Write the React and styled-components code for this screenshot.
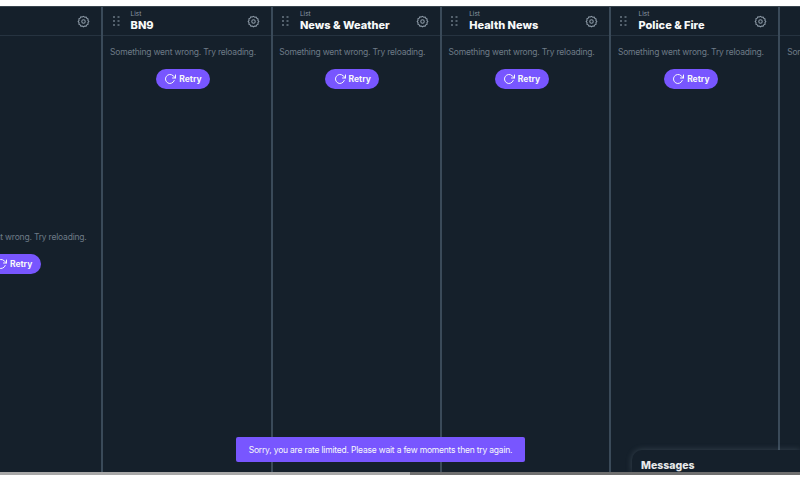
import React from 'react'
import styled, { createGlobalStyle } from 'styled-components'
import { FiRotateCw } from 'react-icons/fi'

const columns = [
  { title: '', kind: '', centered: true },
  { title: 'BN9', kind: 'List' },
  { title: 'News & Weather', kind: 'List' },
  { title: 'Health News', kind: 'List' },
  { title: 'Police & Fire', kind: 'List' },
  { title: '', kind: '' },
]

const Gear = () => (
  <svg width="13" height="13" viewBox="0 0 24 24" fill="none" stroke="currentColor" strokeWidth="2">
    <path d="M12 2.5l2.2 1.6 2.7-.3 1.2 2.4 2.4 1.2-.3 2.7L21.8 12l-1.6 2.2.3 2.7-2.4 1.2-1.2 2.4-2.7-.3L12 21.8l-2.2-1.6-2.7.3-1.2-2.4-2.4-1.2.3-2.7L2.2 12l1.6-2.2-.3-2.7 2.4-1.2 1.2-2.4 2.7.3z" />
    <circle cx="12" cy="12" r="3.2" />
  </svg>
)

const Grip = () => (
  <svg width="7" height="10" viewBox="0 0 7 10" fill="currentColor">
    {[0, 4, 8].map((y) => (
      <g key={y}>
        <rect x="0" y={y} width="2" height="2" />
        <rect x="4.5" y={y} width="2" height="2" />
      </g>
    ))}
  </svg>
)

const App = () => (
  <>
    <GlobalStyle />
    <Page>
      <Board>
        {columns.map((col, index) => (
          <Column key={index}>
            <ColumnHeader>
              <GripSlot>{col.title && <Grip />}</GripSlot>
              <Titles>
                <Kind>{col.kind}</Kind>
                <Title>{col.title}</Title>
              </Titles>
              <GearSlot>
                <Gear />
              </GearSlot>
            </ColumnHeader>
            <ColumnBody $centered={col.centered}>
              <ErrorText>Something went wrong. Try reloading.</ErrorText>
              <RetryButton>
                <FiRotateCw size={12} strokeWidth={2} />
                Retry
              </RetryButton>
            </ColumnBody>
          </Column>
        ))}
        <Toast>Sorry, you are rate limited. Please wait a few moments then try again.</Toast>
        <MessagesDrawer>Messages</MessagesDrawer>
      </Board>
      <Scrollbar>
        <ScrollThumb />
      </Scrollbar>
    </Page>
  </>
)

export default App

const GlobalStyle = createGlobalStyle`
  html, body {
    margin: 0;
    height: 100%;
    background: #ffffff;
    overflow: hidden;
    font-family: Inter, "Liberation Sans", sans-serif;
  }
`

const Page = styled.div`
  width: 800px;
  height: 480px;
  padding-top: 6px;
  box-sizing: border-box;
  display: flex;
  flex-direction: column;
`

const Board = styled.div`
  position: relative;
  flex: 1;
  min-height: 0;
  display: flex;
  overflow: hidden;
  background: #15202b;
  border-top: 1px solid #38444d;
`

const Column = styled.div`
  flex: 0 0 169.3px;
  box-sizing: border-box;
  border-right: 2px solid #3a4a59;
  display: flex;
  flex-direction: column;
  &:first-child {
    margin-left: -66px;
  }
`

const ColumnHeader = styled.div`
  height: 28px;
  flex: none;
  display: flex;
  align-items: center;
  padding: 0 11px 0 9.3px;
  border-bottom: 1px solid #263340;
`

const GripSlot = styled.div`
  width: 18px;
  color: #55626e;
  display: flex;
`

const Titles = styled.div`
  flex: 1;
  min-width: 0;
  display: flex;
  flex-direction: column;
`

const Kind = styled.div`
  font-size: 6.5px;
  line-height: 7px;
  height: 7px;
  color: #8b98a5;
`

const Title = styled.div`
  font-size: 11px;
  line-height: 14px;
  height: 14px;
  font-weight: 800;
  color: #f7f9f9;
  white-space: nowrap;
`

const GearSlot = styled.div`
  color: #8b98a5;
  display: flex;
`

const ColumnBody = styled.div`
  flex: 1;
  display: flex;
  flex-direction: column;
  align-items: center;
  gap: 11px;
  padding: 11px 8px 14px 0;
  justify-content: ${(props) => (props.$centered ? 'center' : 'flex-start')};
`

const ErrorText = styled.div`
  font-size: 8.5px;
  line-height: 11px;
  letter-spacing: -0.2px;
  color: #6e7b87;
  white-space: nowrap;
`

const RetryButton = styled.button`
  height: 20px;
  width: 54px;
  padding: 0;
  border: none;
  border-radius: 10px;
  background: #7856ff;
  color: #f7f9f9;
  font-family: inherit;
  font-size: 8.5px;
  font-weight: 700;
  display: flex;
  align-items: center;
  justify-content: center;
  gap: 3px;
`

const Toast = styled.div`
  position: absolute;
  left: 236px;
  bottom: 10px;
  width: 289px;
  height: 25px;
  background: #7856ff;
  border-radius: 2px;
  color: #f7f9f9;
  font-size: 8.5px;
  letter-spacing: -0.2px;
  white-space: nowrap;
  display: flex;
  align-items: center;
  justify-content: center;
`

const MessagesDrawer = styled.div`
  position: absolute;
  left: 632px;
  right: 0;
  bottom: 0;
  height: 22px;
  box-sizing: border-box;
  padding: 9px 0 0 9px;
  background: #15202b;
  border-radius: 10px 0 0 0;
  box-shadow: 0 0 6px rgba(136, 153, 166, 0.3);
  color: #e7e9ea;
  font-size: 10.5px;
  font-weight: 800;
`

const Scrollbar = styled.div`
  flex: none;
  height: 3px;
  margin-bottom: 5px;
  background: #6f6f6f;
`

const ScrollThumb = styled.div`
  width: 410px;
  height: 100%;
  background: #a8a8a8;
`
